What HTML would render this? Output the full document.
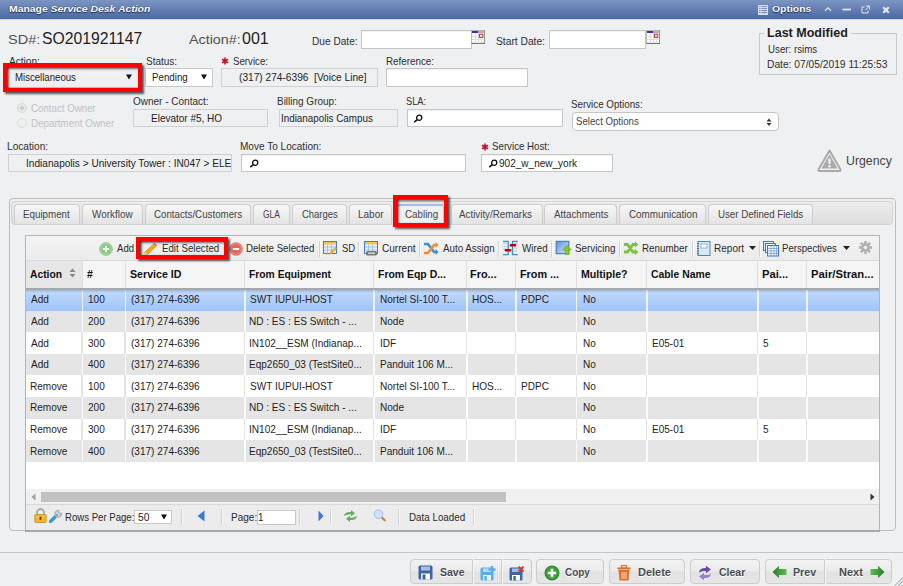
<!DOCTYPE html>
<html><head><meta charset="utf-8">
<style>
*{box-sizing:border-box;margin:0;padding:0}
html,body{width:903px;height:586px;overflow:hidden;background:#eff0f2;font-family:"Liberation Sans",sans-serif;position:relative}
.t{position:absolute;white-space:nowrap;font-family:"Liberation Sans",sans-serif}
.b{position:absolute}
</style></head><body>
<div class="b" style="left:0.00px;top:0.00px;width:903.00px;height:18.80px;background:linear-gradient(#7c95c2,#4a68a5)"></div>
<div class="b" style="left:0.00px;top:18.80px;width:903.00px;height:1.70px;background:linear-gradient(rgba(60,70,90,.3),rgba(60,70,90,0))"></div>
<div class="t" style="left:8.72px;top:3.70px;font-size:9.8px;line-height:9.8px;color:#fff;font-weight:bold;transform:scaleX(1.0617);transform-origin:0 0;text-shadow:0 0 1px #1d2f55,0 1px 1px #1d2f55;">Manage <i>Service Desk Action</i></div>
<div class="t" style="left:772.08px;top:3.70px;font-size:9.8px;line-height:9.8px;color:#fff;font-weight:bold;transform:scaleX(1.0618);transform-origin:0 0;text-shadow:0 0 1px #1d2f55,0 1px 1px #1d2f55;">Options</div>
<svg class="b" style="left:758px;top:4.5px" width="10" height="10" viewBox="0 0 10 10"><rect x="0.5" y="0.5" width="9" height="9" fill="rgba(255,255,255,.15)" stroke="#d8e0ee"/><path d="M1 2.5H9M1 4.5H9M1 6.5H9M1 8.5H9" stroke="#d8e0ee" stroke-width="0.9"/><path d="M3 1V9" stroke="#d8e0ee" stroke-width="0.9"/></svg>
<svg class="b" style="left:823.5px;top:6px" width="8" height="6" viewBox="0 0 8 6"><path d="M1 4.8L4 1.8L7 4.8" fill="none" stroke="#dfe6f2" stroke-width="1.3"/></svg>
<svg class="b" style="left:841.5px;top:8px" width="10" height="3" viewBox="0 0 10 3"><rect x="0.5" y="0.6" width="8.5" height="1.8" fill="#dfe6f2"/></svg>
<svg class="b" style="left:861px;top:5px" width="10" height="9" viewBox="0 0 10 9"><path d="M3.5 2H1V8H7V5.5" fill="none" stroke="#dfe6f2" stroke-width="1"/><path d="M5 1H8.5V4.5M8.5 1L4.5 5" fill="none" stroke="#dfe6f2" stroke-width="1"/></svg>
<svg class="b" style="left:881.5px;top:5.5px" width="8" height="8" viewBox="0 0 8 8"><path d="M1.2 1.2L6.8 6.8M6.8 1.2L1.2 6.8" stroke="#e6ecf6" stroke-width="2"/></svg>
<div class="t" style="left:7.55px;top:33.44px;font-size:13.3px;line-height:13.3px;color:#505050;font-weight:normal;transform:scaleX(1.0900);transform-origin:0 0;">SD#:</div>
<div class="t" style="left:41.59px;top:31.46px;font-size:16px;line-height:16px;color:#1e1e1e;font-weight:normal;transform:scaleX(0.9835);transform-origin:0 0;">SO201921147</div>
<div class="t" style="left:188.80px;top:33.29px;font-size:13.6px;line-height:13.6px;color:#505050;font-weight:normal;transform:scaleX(1.0513);transform-origin:0 0;">Action#:</div>
<div class="t" style="left:242.44px;top:31.46px;font-size:16px;line-height:16px;color:#1e1e1e;font-weight:normal;transform:scaleX(1.0016);transform-origin:0 0;">001</div>
<div class="t" style="left:312.19px;top:36.16px;font-size:10.8px;line-height:10.8px;color:#2e2e2e;font-weight:normal;transform:scaleX(0.9377);transform-origin:0 0;">Due Date:</div>
<div class="b" style="left:361.00px;top:30.30px;width:110.60px;height:18.40px;background:#fff;border:1px solid #c6c6c6;box-shadow:inset 0 1px 1px rgba(0,0,0,.06)"></div>
<div class="t" style="left:496.14px;top:36.16px;font-size:10.8px;line-height:10.8px;color:#2e2e2e;font-weight:normal;transform:scaleX(0.9488);transform-origin:0 0;">Start Date:</div>
<div class="b" style="left:549.30px;top:30.30px;width:96.30px;height:18.40px;background:#fff;border:1px solid #c6c6c6;box-shadow:inset 0 1px 1px rgba(0,0,0,.06)"></div>
<svg class="b" style="left:471px;top:30px" width="14" height="14" viewBox="0 0 14 14"><rect x="0.5" y="0.5" width="13.5" height="13" fill="#fff" stroke="#b8b8b8"/><path d="M14 0.5V13.8H0.5" fill="none" stroke="#5a5a5a" stroke-width="1.2"/><rect x="1" y="1" width="6.5" height="2" fill="#3434b4"/><rect x="7.5" y="1" width="6" height="2" fill="#b0b0b0"/><path d="M1 6.5H13.5M1 9.5H13.5M1 12.3H13.5M4.5 3V13.3M7.5 3V13.3M10.5 3V13.3" stroke="#dadada" stroke-width="0.9"/><rect x="8.4" y="4.2" width="3.4" height="3.2" fill="#fbecec" stroke="#c03434" stroke-width="1"/></svg>
<svg class="b" style="left:645.6px;top:30px" width="14" height="14" viewBox="0 0 14 14"><rect x="0.5" y="0.5" width="13.5" height="13" fill="#fff" stroke="#b8b8b8"/><path d="M14 0.5V13.8H0.5" fill="none" stroke="#5a5a5a" stroke-width="1.2"/><rect x="1" y="1" width="6.5" height="2" fill="#3434b4"/><rect x="7.5" y="1" width="6" height="2" fill="#b0b0b0"/><path d="M1 6.5H13.5M1 9.5H13.5M1 12.3H13.5M4.5 3V13.3M7.5 3V13.3M10.5 3V13.3" stroke="#dadada" stroke-width="0.9"/><rect x="8.4" y="4.2" width="3.4" height="3.2" fill="#fbecec" stroke="#c03434" stroke-width="1"/></svg>
<div class="b" style="left:759.30px;top:33.20px;width:137.30px;height:42.20px;border:1px solid #c9c9c9"></div>
<div class="b" style="left:764.00px;top:27.00px;width:87.00px;height:12.00px;background:#eff0f2"></div>
<div class="t" style="left:766.98px;top:26.66px;font-size:12.8px;line-height:12.8px;color:#1e1e1e;font-weight:bold;transform:scaleX(0.9798);transform-origin:0 0;">Last Modified</div>
<div class="t" style="left:767.57px;top:43.56px;font-size:10.8px;line-height:10.8px;color:#2e2e2e;font-weight:normal;transform:scaleX(0.9000);transform-origin:0 0;">User: rsims</div>
<div class="t" style="left:767.48px;top:58.66px;font-size:10.8px;line-height:10.8px;color:#2e2e2e;font-weight:normal;transform:scaleX(0.9482);transform-origin:0 0;">Date: 07/05/2019 11:25:53</div>
<div class="t" style="left:8.50px;top:55.86px;font-size:10.8px;line-height:10.8px;color:#2e2e2e;font-weight:normal;transform:scaleX(0.9353);transform-origin:0 0;">Action:</div>
<div class="t" style="left:145.65px;top:55.86px;font-size:10.8px;line-height:10.8px;color:#2e2e2e;font-weight:normal;transform:scaleX(0.9259);transform-origin:0 0;">Status:</div>
<div class="t" style="left:232.86px;top:55.86px;font-size:10.8px;line-height:10.8px;color:#2e2e2e;font-weight:normal;transform:scaleX(0.8967);transform-origin:0 0;">Service:</div>
<div class="t" style="left:386.21px;top:55.86px;font-size:10.8px;line-height:10.8px;color:#2e2e2e;font-weight:normal;transform:scaleX(0.9093);transform-origin:0 0;">Reference:</div>
<svg class="b" style="left:221px;top:57px" width="8" height="8" viewBox="0 0 8 8"><path d="M4 0.5V7.5M1 2.2L7 5.8M7 2.2L1 5.8" stroke="#c8102a" stroke-width="1.6"/></svg>
<div class="b" style="left:7.00px;top:66.80px;width:131.00px;height:20.90px;background:linear-gradient(#f1f2f4,#eceef0);border-bottom:1px solid #c4c4c4"></div>
<div class="b" style="left:3.00px;top:62.80px;width:139.00px;height:28.90px;z-index:5;border:4px solid #ff0000;box-shadow:1.5px 1.5px 2px rgba(0,0,0,.65), inset 1.5px 1.5px 2.5px rgba(0,0,0,.8)"></div>
<div class="t" style="left:14.73px;top:72.46px;font-size:10.8px;line-height:10.8px;color:#222;font-weight:normal;transform:scaleX(0.8902);transform-origin:0 0;">Miscellaneous</div>
<svg class="b" style="left:125.5px;top:74px" width="6" height="6" viewBox="0 0 6 6"><path d="M0 0.5H6L3 5.5Z" fill="#111"/></svg>
<div class="b" style="left:145.40px;top:68.30px;width:67.60px;height:18.50px;background:#fff;border:1px solid #c9c9c9"></div>
<div class="t" style="left:152.22px;top:72.36px;font-size:10.8px;line-height:10.8px;color:#222;font-weight:normal;transform:scaleX(0.9023);transform-origin:0 0;">Pending</div>
<svg class="b" style="left:201.3px;top:74px" width="6" height="6" viewBox="0 0 6 6"><path d="M0 0.5H6L3 5.5Z" fill="#111"/></svg>
<div class="b" style="left:221.30px;top:68.30px;width:156.50px;height:18.50px;background:#eff0f2;border:1px solid #d0d0d0"></div>
<div class="t" style="left:239.39px;top:72.36px;font-size:10.8px;line-height:10.8px;color:#222;font-weight:normal;transform:scaleX(0.9404);transform-origin:0 0;">(317) 274-6396&nbsp; [Voice Line]</div>
<div class="b" style="left:386.00px;top:68.30px;width:142.00px;height:18.50px;background:#fff;border:1px solid #c6c6c6;box-shadow:inset 0 1px 1px rgba(0,0,0,.06)"></div>
<div class="b" style="left:17.00px;top:103.00px;width:10.00px;height:10.00px;border-radius:50%;border:1px solid #d8d8d8;background:#eaeaea"></div>
<div class="b" style="left:20.00px;top:106.00px;width:4.00px;height:4.00px;border-radius:50%;background:#c9c9c9"></div>
<div class="b" style="left:17.00px;top:118.00px;width:10.00px;height:10.00px;border-radius:50%;border:1px solid #dcdcdc;background:#efefef"></div>
<div class="t" style="left:31.41px;top:102.66px;font-size:10.8px;line-height:10.8px;color:#c2c2c2;font-weight:normal;transform:scaleX(0.9000);transform-origin:0 0;">Contact Owner</div>
<div class="t" style="left:31.11px;top:117.66px;font-size:10.8px;line-height:10.8px;color:#c2c2c2;font-weight:normal;transform:scaleX(0.9132);transform-origin:0 0;">Department Owner</div>
<div class="t" style="left:132.75px;top:95.86px;font-size:10.8px;line-height:10.8px;color:#2e2e2e;font-weight:normal;transform:scaleX(0.9253);transform-origin:0 0;">Owner - Contact:</div>
<div class="b" style="left:133.00px;top:109.30px;width:134.60px;height:18.20px;background:#eff0f2;border:1px solid #d0d0d0"></div>
<div class="t" style="left:151.40px;top:112.86px;font-size:10.8px;line-height:10.8px;color:#222;font-weight:normal;transform:scaleX(0.9253);transform-origin:0 0;">Elevator #5, HO</div>
<div class="t" style="left:277.40px;top:95.86px;font-size:10.8px;line-height:10.8px;color:#2e2e2e;font-weight:normal;transform:scaleX(0.9235);transform-origin:0 0;">Billing Group:</div>
<div class="b" style="left:278.50px;top:109.30px;width:119.00px;height:18.20px;background:#eff0f2;border:1px solid #d0d0d0"></div>
<div class="t" style="left:280.81px;top:112.86px;font-size:10.8px;line-height:10.8px;color:#222;font-weight:normal;transform:scaleX(0.9114);transform-origin:0 0;">Indianapolis Campus</div>
<div class="t" style="left:405.78px;top:95.86px;font-size:10.8px;line-height:10.8px;color:#2e2e2e;font-weight:normal;transform:scaleX(0.8554);transform-origin:0 0;">SLA:</div>
<div class="b" style="left:406.60px;top:109.30px;width:156.90px;height:18.20px;background:#fff;border:1px solid #c6c6c6;box-shadow:inset 0 1px 1px rgba(0,0,0,.06)"></div>
<svg class="b" style="left:413px;top:114px" width="10" height="9" viewBox="0 0 10 9"><circle cx="6.2" cy="3.8" r="2.6" fill="#fff" stroke="#111" stroke-width="1.3"/><path d="M4.3 5.7L1.3 8.2" stroke="#111" stroke-width="1.6"/></svg>
<div class="t" style="left:571.16px;top:99.36px;font-size:10.8px;line-height:10.8px;color:#2e2e2e;font-weight:normal;transform:scaleX(0.9047);transform-origin:0 0;">Service Options:</div>
<div class="b" style="left:572.40px;top:112.20px;width:206.30px;height:19.30px;background:#fff;border:1px solid #c6c6c6;border-radius:4px"></div>
<div class="t" style="left:575.57px;top:115.76px;font-size:10.8px;line-height:10.8px;color:#444;font-weight:normal;transform:scaleX(0.8935);transform-origin:0 0;">Select Options</div>
<svg class="b" style="left:766px;top:118px" width="6" height="9" viewBox="0 0 6 9"><path d="M0.5 3.5H5.5L3 0.5ZM0.5 5H5.5L3 8Z" fill="#333"/></svg>
<div class="t" style="left:7.29px;top:141.06px;font-size:10.8px;line-height:10.8px;color:#2e2e2e;font-weight:normal;transform:scaleX(0.9378);transform-origin:0 0;">Location:</div>
<div class="b" style="left:8.30px;top:153.80px;width:224.20px;height:18.60px;background:#eff0f2;border:1px solid #d0d0d0;overflow:hidden"></div>
<div class="b" style="left:9.3px;top:154.8px;width:222px;height:16.6px;overflow:hidden">
<div class="t" style="left:16.69px;top:2.86px;font-size:10.8px;line-height:10.8px;color:#222;font-weight:normal;transform:scaleX(0.9353);transform-origin:0 0;">Indianapolis &gt; University Tower : IN047 &gt; ELEV</div>
</div>
<div class="t" style="left:240.30px;top:141.06px;font-size:10.8px;line-height:10.8px;color:#2e2e2e;font-weight:normal;transform:scaleX(0.9306);transform-origin:0 0;">Move To Location:</div>
<div class="b" style="left:241.00px;top:154.30px;width:224.50px;height:17.90px;background:#fff;border:1px solid #c6c6c6;box-shadow:inset 0 1px 1px rgba(0,0,0,.06)"></div>
<svg class="b" style="left:248.5px;top:159px" width="10" height="9" viewBox="0 0 10 9"><circle cx="6.2" cy="3.8" r="2.6" fill="#fff" stroke="#111" stroke-width="1.3"/><path d="M4.3 5.7L1.3 8.2" stroke="#111" stroke-width="1.6"/></svg>
<svg class="b" style="left:481px;top:143px" width="8" height="8" viewBox="0 0 8 8"><path d="M4 0.5V7.5M1 2.2L7 5.8M7 2.2L1 5.8" stroke="#c8102a" stroke-width="1.6"/></svg>
<div class="t" style="left:491.96px;top:141.06px;font-size:10.8px;line-height:10.8px;color:#2e2e2e;font-weight:normal;transform:scaleX(0.8997);transform-origin:0 0;">Service Host:</div>
<div class="b" style="left:481.40px;top:154.30px;width:131.60px;height:17.90px;background:#fff;border:1px solid #c6c6c6;box-shadow:inset 0 1px 1px rgba(0,0,0,.06)"></div>
<svg class="b" style="left:487.5px;top:159px" width="10" height="9" viewBox="0 0 10 9"><circle cx="6.2" cy="3.8" r="2.6" fill="#fff" stroke="#111" stroke-width="1.3"/><path d="M4.3 5.7L1.3 8.2" stroke="#111" stroke-width="1.6"/></svg>
<div class="t" style="left:498.55px;top:157.66px;font-size:10.8px;line-height:10.8px;color:#222;font-weight:normal;transform:scaleX(0.9289);transform-origin:0 0;">902_w_new_york</div>
<svg class="b" style="left:817px;top:148.5px" width="25" height="23" viewBox="0 0 25 23"><path d="M12.5 1.5L23.5 20.5Q24 22 22.5 22H2.5Q1 22 1.5 20.5Z" fill="none" stroke="#a9a9a9" stroke-width="2" stroke-linejoin="round"/><path d="M12.5 5.5L20.5 19.5H4.5Z" fill="#a9a9a9"/><rect x="11.3" y="9.5" width="2.4" height="5.5" rx="1" fill="#eff0f2"/><circle cx="12.5" cy="17.2" r="1.3" fill="#eff0f2"/></svg>
<div class="t" style="left:846.08px;top:153.83px;font-size:13.2px;line-height:13.2px;color:#444;font-weight:normal;transform:scaleX(0.9340);transform-origin:0 0;">Urgency</div>
<div class="b" style="left:8.50px;top:198.30px;width:887.50px;height:333.20px;border:1px solid #bdbdbd;border-radius:4px"></div>
<div class="b" style="left:11.00px;top:200.50px;width:882.40px;height:24.50px;border:1px solid #d3d3d3;border-radius:4px;background:linear-gradient(#ececec,#dedede)"></div>
<div class="b" style="left:14.30px;top:204.30px;width:65.30px;height:20.20px;background:linear-gradient(#f7f7f7,#e3e3e3);border:1px solid #cdcdcd;border-bottom:none;border-radius:4px 4px 0 0"></div>
<div class="t" style="left:23.12px;top:208.86px;font-size:10.8px;line-height:10.8px;color:#444;font-weight:normal;transform:scaleX(0.9062);transform-origin:0 0;">Equipment</div>
<div class="b" style="left:81.80px;top:204.30px;width:60.90px;height:20.20px;background:linear-gradient(#f7f7f7,#e3e3e3);border:1px solid #cdcdcd;border-bottom:none;border-radius:4px 4px 0 0"></div>
<div class="t" style="left:91.60px;top:208.86px;font-size:10.8px;line-height:10.8px;color:#444;font-weight:normal;transform:scaleX(0.9180);transform-origin:0 0;">Workflow</div>
<div class="b" style="left:144.80px;top:204.30px;width:106.20px;height:20.20px;background:linear-gradient(#f7f7f7,#e3e3e3);border:1px solid #cdcdcd;border-bottom:none;border-radius:4px 4px 0 0"></div>
<div class="t" style="left:153.61px;top:208.86px;font-size:10.8px;line-height:10.8px;color:#444;font-weight:normal;transform:scaleX(0.9017);transform-origin:0 0;">Contacts/Customers</div>
<div class="b" style="left:253.00px;top:204.30px;width:36.80px;height:20.20px;background:linear-gradient(#f7f7f7,#e3e3e3);border:1px solid #cdcdcd;border-bottom:none;border-radius:4px 4px 0 0"></div>
<div class="t" style="left:263.27px;top:208.86px;font-size:10.8px;line-height:10.8px;color:#444;font-weight:normal;transform:scaleX(0.7882);transform-origin:0 0;">GLA</div>
<div class="b" style="left:292.00px;top:204.30px;width:54.50px;height:20.20px;background:linear-gradient(#f7f7f7,#e3e3e3);border:1px solid #cdcdcd;border-bottom:none;border-radius:4px 4px 0 0"></div>
<div class="t" style="left:302.03px;top:208.86px;font-size:10.8px;line-height:10.8px;color:#444;font-weight:normal;transform:scaleX(0.8771);transform-origin:0 0;">Charges</div>
<div class="b" style="left:349.30px;top:204.30px;width:42.50px;height:20.20px;background:linear-gradient(#f7f7f7,#e3e3e3);border:1px solid #cdcdcd;border-bottom:none;border-radius:4px 4px 0 0"></div>
<div class="t" style="left:358.20px;top:208.86px;font-size:10.8px;line-height:10.8px;color:#444;font-weight:normal;transform:scaleX(0.9240);transform-origin:0 0;">Labor</div>
<div class="b" style="left:397.00px;top:203.50px;width:47.00px;height:22.00px;background:#eff0f2;border:1px solid #cfcfcf;border-bottom:none;border-top:2px solid #9fbde6;border-radius:3px 3px 0 0"></div>
<div class="t" style="left:404.51px;top:208.86px;font-size:10.8px;line-height:10.8px;color:#444;font-weight:normal;transform:scaleX(0.9090);transform-origin:0 0;">Cabling</div>
<div class="b" style="left:450.50px;top:204.30px;width:92.20px;height:20.20px;background:linear-gradient(#f7f7f7,#e3e3e3);border:1px solid #cdcdcd;border-bottom:none;border-radius:4px 4px 0 0"></div>
<div class="t" style="left:458.90px;top:208.86px;font-size:10.8px;line-height:10.8px;color:#444;font-weight:normal;transform:scaleX(0.9072);transform-origin:0 0;">Activity/Remarks</div>
<div class="b" style="left:544.00px;top:204.30px;width:72.70px;height:20.20px;background:linear-gradient(#f7f7f7,#e3e3e3);border:1px solid #cdcdcd;border-bottom:none;border-radius:4px 4px 0 0"></div>
<div class="t" style="left:553.70px;top:208.86px;font-size:10.8px;line-height:10.8px;color:#444;font-weight:normal;transform:scaleX(0.9050);transform-origin:0 0;">Attachments</div>
<div class="b" style="left:619.00px;top:204.30px;width:87.20px;height:20.20px;background:linear-gradient(#f7f7f7,#e3e3e3);border:1px solid #cdcdcd;border-bottom:none;border-radius:4px 4px 0 0"></div>
<div class="t" style="left:628.91px;top:208.86px;font-size:10.8px;line-height:10.8px;color:#444;font-weight:normal;transform:scaleX(0.9131);transform-origin:0 0;">Communication</div>
<div class="b" style="left:708.40px;top:204.30px;width:104.30px;height:20.20px;background:linear-gradient(#f7f7f7,#e3e3e3);border:1px solid #cdcdcd;border-bottom:none;border-radius:4px 4px 0 0"></div>
<div class="t" style="left:717.97px;top:208.86px;font-size:10.8px;line-height:10.8px;color:#444;font-weight:normal;transform:scaleX(0.8982);transform-origin:0 0;">User Defined Fields</div>
<div class="b" style="left:393.00px;top:195.00px;width:55.00px;height:32.00px;z-index:5;border:4px solid #ff0000;box-shadow:1.5px 1.5px 2px rgba(0,0,0,.65), inset 1.5px 1.5px 2.5px rgba(0,0,0,.8)"></div>
<div class="b" style="left:25.00px;top:235.00px;width:855.00px;height:296.00px;border:1px solid #b4b4b4;background:#fff"></div>
<div class="b" style="left:26.00px;top:236.00px;width:853.00px;height:24.50px;background:linear-gradient(#f4f4f4,#ebebeb);border-bottom:1px solid #dadada"></div>
<div class="t" style="left:117.40px;top:243.36px;font-size:10.8px;line-height:10.8px;color:#2a2a2a;font-weight:normal;transform:scaleX(0.8882);transform-origin:0 0;">Add</div>
<div class="t" style="left:161.82px;top:243.36px;font-size:10.8px;line-height:10.8px;color:#2a2a2a;font-weight:normal;transform:scaleX(0.8986);transform-origin:0 0;">Edit Selected</div>
<div class="t" style="left:246.23px;top:243.36px;font-size:10.8px;line-height:10.8px;color:#2a2a2a;font-weight:normal;transform:scaleX(0.8965);transform-origin:0 0;">Delete Selected</div>
<div class="t" style="left:341.57px;top:243.36px;font-size:10.8px;line-height:10.8px;color:#2a2a2a;font-weight:normal;transform:scaleX(0.8795);transform-origin:0 0;">SD</div>
<div class="t" style="left:381.50px;top:243.36px;font-size:10.8px;line-height:10.8px;color:#2a2a2a;font-weight:normal;transform:scaleX(0.9316);transform-origin:0 0;">Current</div>
<div class="t" style="left:442.60px;top:243.36px;font-size:10.8px;line-height:10.8px;color:#2a2a2a;font-weight:normal;transform:scaleX(0.9064);transform-origin:0 0;">Auto Assign</div>
<div class="t" style="left:522.00px;top:243.36px;font-size:10.8px;line-height:10.8px;color:#2a2a2a;font-weight:normal;transform:scaleX(0.9078);transform-origin:0 0;">Wired</div>
<div class="t" style="left:574.56px;top:243.36px;font-size:10.8px;line-height:10.8px;color:#2a2a2a;font-weight:normal;transform:scaleX(0.9086);transform-origin:0 0;">Servicing</div>
<div class="t" style="left:641.72px;top:243.36px;font-size:10.8px;line-height:10.8px;color:#2a2a2a;font-weight:normal;transform:scaleX(0.9067);transform-origin:0 0;">Renumber</div>
<div class="t" style="left:714.40px;top:243.36px;font-size:10.8px;line-height:10.8px;color:#2a2a2a;font-weight:normal;transform:scaleX(0.9291);transform-origin:0 0;">Report</div>
<div class="t" style="left:781.93px;top:243.36px;font-size:10.8px;line-height:10.8px;color:#2a2a2a;font-weight:normal;transform:scaleX(0.8880);transform-origin:0 0;">Perspectives</div>
<div class="b" style="left:318.50px;top:240.50px;width:1.00px;height:16.00px;background:#d4d4d4"></div>
<div class="b" style="left:319.50px;top:240.50px;width:1.00px;height:16.00px;background:#fafafa"></div>
<div class="b" style="left:358.30px;top:240.50px;width:1.00px;height:16.00px;background:#d4d4d4"></div>
<div class="b" style="left:359.30px;top:240.50px;width:1.00px;height:16.00px;background:#fafafa"></div>
<div class="b" style="left:418.50px;top:240.50px;width:1.00px;height:16.00px;background:#d4d4d4"></div>
<div class="b" style="left:419.50px;top:240.50px;width:1.00px;height:16.00px;background:#fafafa"></div>
<div class="b" style="left:498.30px;top:240.50px;width:1.00px;height:16.00px;background:#d4d4d4"></div>
<div class="b" style="left:499.30px;top:240.50px;width:1.00px;height:16.00px;background:#fafafa"></div>
<div class="b" style="left:551.00px;top:240.50px;width:1.00px;height:16.00px;background:#d4d4d4"></div>
<div class="b" style="left:552.00px;top:240.50px;width:1.00px;height:16.00px;background:#fafafa"></div>
<div class="b" style="left:618.70px;top:240.50px;width:1.00px;height:16.00px;background:#d4d4d4"></div>
<div class="b" style="left:619.70px;top:240.50px;width:1.00px;height:16.00px;background:#fafafa"></div>
<div class="b" style="left:691.50px;top:240.50px;width:1.00px;height:16.00px;background:#d4d4d4"></div>
<div class="b" style="left:692.50px;top:240.50px;width:1.00px;height:16.00px;background:#fafafa"></div>
<div class="b" style="left:758.90px;top:240.50px;width:1.00px;height:16.00px;background:#d4d4d4"></div>
<div class="b" style="left:759.90px;top:240.50px;width:1.00px;height:16.00px;background:#fafafa"></div>
<svg class="b" style="left:99px;top:242px" width="14" height="14" viewBox="0 0 14 14"><circle cx="7" cy="7" r="6.3" fill="#a8dca0" stroke="#7cbc74" stroke-width="0.8"/><circle cx="7" cy="7" r="4.8" fill="#86c97d"/><path d="M7 3.8V10.2M3.8 7H10.2" stroke="#fff" stroke-width="2"/></svg>
<svg class="b" style="left:141.5px;top:241.5px" width="16" height="15" viewBox="0 0 16 15"><path d="M2 13L3 10L12 1.5L14.5 4L5.5 12.5Z" fill="#f5a623" stroke="#c77d10" stroke-width="0.6"/><path d="M12 1.5L14.5 4L15 3.3L12.7 1Z" fill="#c0599b"/><path d="M2 13L3 10L5.5 12.5Z" fill="#f1d9a8"/></svg>
<svg class="b" style="left:229px;top:242px" width="14" height="14" viewBox="0 0 14 14"><circle cx="7" cy="7" r="6.3" fill="#ee8a7c" stroke="#d66858" stroke-width="0.8"/><circle cx="7" cy="7" r="4.8" fill="#e4675a"/><path d="M3.8 7H10.2" stroke="#fff" stroke-width="2"/></svg>
<svg class="b" style="left:322.5px;top:241px" width="15" height="15" viewBox="0 0 15 15"><rect x="0.5" y="0.5" width="13" height="12" fill="#e8f0fa" stroke="#3d82c4"/><rect x="1" y="1" width="12" height="2.5" fill="#f2c35a"/><path d="M1 6H13M1 9H13M4.5 3.5V12.5M8.5 3.5V12.5" stroke="#9bb8dc" stroke-width="0.8"/><path d="M6 14L7 11L12.5 6L14 7.5L8.5 12.5Z" fill="#f5a623"/><path d="M12.5 6L14 7.5L14.6 6.9L13.1 5.4Z" fill="#c0599b"/></svg>
<svg class="b" style="left:363.5px;top:241px" width="15" height="15" viewBox="0 0 15 15"><rect x="0.5" y="0.5" width="13" height="12" fill="#e8f0fa" stroke="#3d82c4"/><rect x="1" y="1" width="12" height="2.5" fill="#f2c35a"/><path d="M1 6H13M1 9H13M4.5 3.5V12.5M8.5 3.5V12.5" stroke="#9bb8dc" stroke-width="0.8"/><rect x="2" y="10" width="11" height="4.5" rx="1.5" fill="#777"/><rect x="4" y="11.3" width="7" height="1.8" fill="#ccc"/></svg>
<svg class="b" style="left:423px;top:241px" width="16" height="15" viewBox="0 0 16 15"><path d="M1 3L5 3L11 11L14 11" fill="none" stroke="#3d8fd0" stroke-width="2.6"/><path d="M1 12L5 12L11 4L13 4" fill="none" stroke="#e8913a" stroke-width="2.6"/><path d="M12.5 1L15.5 4L12.5 7Z" fill="#e8913a"/><path d="M12.5 8L15.5 11L12.5 14Z" fill="#3d8fd0"/></svg>
<svg class="b" style="left:500px;top:239px" width="20" height="19" viewBox="0 0 20 19"><path d="M3 2.4H8.2V15.6H3M17.8 2.4H12.5V15.6H17.8" fill="none" stroke="#3a93c8" stroke-width="1.3"/><path d="M3.2 4.2H7.5M13.2 4.2H17.6" stroke="#8cc8f0" stroke-width="1"/><path d="M3.5 7.5H6.5M3.5 10H5.5M14 9H17M14.5 11.8H17" stroke="#c4c4c4" stroke-width="1"/><path d="M10.8 6.2H15.2M5.8 11.3H10.2" stroke="#c00010" stroke-width="2.4" stroke-linecap="round"/></svg>
<svg class="b" style="left:555px;top:240px" width="17" height="16" viewBox="0 0 17 16"><defs><linearGradient id="sg" x1="0" y1="0" x2="1" y2="1"><stop offset="0" stop-color="#5d93d4"/><stop offset="1" stop-color="#d8e8f6"/></linearGradient></defs><rect x="1.2" y="1.4" width="12.6" height="12.2" fill="url(#sg)" stroke="#4a7fc0" stroke-width="1.2"/><path d="M12 5.3L16.2 9.8H13.8V14.6H10.2V9.8H7.8Z" fill="#8cc820" stroke="#5f9a10" stroke-width="0.6"/></svg>
<svg class="b" style="left:623px;top:241px" width="16" height="15" viewBox="0 0 16 15"><path d="M1 3.5H4.5L10 11H12.5M1 11H4.5L10 3.5H12.5" fill="none" stroke="#7ec23a" stroke-width="2.8"/><path d="M12 0.5L15.5 3.5L12 6.5ZM12 8L15.5 11L12 14Z" fill="#7ec23a"/></svg>
<svg class="b" style="left:696px;top:241px" width="15" height="15" viewBox="0 0 15 15"><rect x="2" y="0.5" width="12" height="14" fill="#dbe9f7" stroke="#4a83c0"/><rect x="5" y="3" width="6" height="4" fill="#fff" stroke="#7aa3d0" stroke-width="0.8"/><path d="M1 2.5H3M1 5H3M1 7.5H3M1 10H3M1 12.5H3" stroke="#4a6f99"/></svg>
<svg class="b" style="left:749px;top:246px" width="7" height="4" viewBox="0 0 7 4"><path d="M0 0H7L3.5 4Z" fill="#222"/></svg>
<svg class="b" style="left:762.5px;top:240.5px" width="17" height="16" viewBox="0 0 17 16"><rect x="0.5" y="0.5" width="10" height="9" fill="#e3eef9" stroke="#3a7cc0"/><rect x="2.5" y="2.5" width="10" height="9" fill="#e3eef9" stroke="#3a7cc0"/><rect x="4.5" y="4.5" width="11" height="10.5" fill="#f4f8fc" stroke="#3a7cc0"/><path d="M5 7.5H15M5 10H15M5 12.5H15M8 5V15M11 5V15M13.5 5V15" stroke="#6a9ad0" stroke-width="0.7"/></svg>
<svg class="b" style="left:842.5px;top:246px" width="7" height="4" viewBox="0 0 7 4"><path d="M0 0H7L3.5 4Z" fill="#222"/></svg>
<svg class="b" style="left:859px;top:241px" width="13" height="13" viewBox="0 0 13 13"><g fill="#b0b0b0"><circle cx="6.5" cy="6.5" r="4.3"/><rect x="5.2" y="0" width="2.6" height="13"/><rect x="0" y="5.2" width="13" height="2.6"/><rect x="5.2" y="0" width="2.6" height="13" transform="rotate(45 6.5 6.5)"/><rect x="5.2" y="0" width="2.6" height="13" transform="rotate(-45 6.5 6.5)"/></g><circle cx="6.5" cy="6.5" r="1.8" fill="#eeeeee"/></svg>
<div class="b" style="left:135.80px;top:237.00px;width:91.80px;height:21.80px;z-index:5;border:4px solid #ff0000;box-shadow:1.5px 1.5px 2px rgba(0,0,0,.65), inset 1.5px 1.5px 2.5px rgba(0,0,0,.8)"></div>
<div class="b" style="left:26.00px;top:260.50px;width:853.00px;height:28.50px;background:#f5f5f5"></div>
<div class="b" style="left:26.00px;top:260.50px;width:56.00px;height:28.50px;background:#e6e6e6"></div>
<div class="b" style="left:81.50px;top:260.50px;width:1.00px;height:28.50px;background:#dedede"></div>
<div class="b" style="left:124.50px;top:260.50px;width:1.00px;height:28.50px;background:#dedede"></div>
<div class="b" style="left:244.10px;top:260.50px;width:1.00px;height:28.50px;background:#dedede"></div>
<div class="b" style="left:373.00px;top:260.50px;width:1.00px;height:28.50px;background:#dedede"></div>
<div class="b" style="left:466.00px;top:260.50px;width:1.00px;height:28.50px;background:#dedede"></div>
<div class="b" style="left:515.30px;top:260.50px;width:1.00px;height:28.50px;background:#dedede"></div>
<div class="b" style="left:575.80px;top:260.50px;width:1.00px;height:28.50px;background:#dedede"></div>
<div class="b" style="left:646.30px;top:260.50px;width:1.00px;height:28.50px;background:#dedede"></div>
<div class="b" style="left:756.90px;top:260.50px;width:1.00px;height:28.50px;background:#dedede"></div>
<div class="b" style="left:806.20px;top:260.50px;width:1.00px;height:28.50px;background:#dedede"></div>
<div class="t" style="left:29.74px;top:268.69px;font-size:11px;line-height:11px;color:#111;font-weight:bold;transform:scaleX(0.9376);transform-origin:0 0;">Action</div>
<div class="t" style="left:87.34px;top:268.69px;font-size:11px;line-height:11px;color:#111;font-weight:bold;transform:scaleX(0.9500);transform-origin:0 0;">#</div>
<div class="t" style="left:129.73px;top:268.69px;font-size:11px;line-height:11px;color:#111;font-weight:bold;transform:scaleX(0.9672);transform-origin:0 0;">Service ID</div>
<div class="t" style="left:249.43px;top:268.69px;font-size:11px;line-height:11px;color:#111;font-weight:bold;transform:scaleX(0.9368);transform-origin:0 0;">From Equipment</div>
<div class="t" style="left:378.02px;top:268.69px;font-size:11px;line-height:11px;color:#111;font-weight:bold;transform:scaleX(0.9498);transform-origin:0 0;">From Eqp D...</div>
<div class="t" style="left:470.49px;top:268.69px;font-size:11px;line-height:11px;color:#111;font-weight:bold;transform:scaleX(0.9917);transform-origin:0 0;">Fro...</div>
<div class="t" style="left:519.90px;top:268.69px;font-size:11px;line-height:11px;color:#111;font-weight:bold;transform:scaleX(0.9848);transform-origin:0 0;">From ...</div>
<div class="t" style="left:581.01px;top:268.69px;font-size:11px;line-height:11px;color:#111;font-weight:bold;transform:scaleX(0.9634);transform-origin:0 0;">Multiple?</div>
<div class="t" style="left:651.48px;top:268.69px;font-size:11px;line-height:11px;color:#111;font-weight:bold;transform:scaleX(0.9437);transform-origin:0 0;">Cable Name</div>
<div class="t" style="left:761.87px;top:268.69px;font-size:11px;line-height:11px;color:#111;font-weight:bold;transform:scaleX(1.0207);transform-origin:0 0;">Pai...</div>
<div class="t" style="left:811.37px;top:268.69px;font-size:11px;line-height:11px;color:#111;font-weight:bold;transform:scaleX(1.0239);transform-origin:0 0;">Pair/Stran...</div>
<svg class="b" style="left:69px;top:267.5px" width="7" height="10" viewBox="0 0 7 10"><path d="M0.5 4H6.5L3.5 0.5Z" fill="#888"/><path d="M0.5 6H6.5L3.5 9.5Z" fill="#888"/></svg>
<div class="b" style="left:26.00px;top:289.00px;width:853.00px;height:21.60px;background:linear-gradient(#c4dbfc,#9fc4f9)"></div>
<div class="b" style="left:26.00px;top:310.60px;width:853.00px;height:21.60px;background:#e5e5e5"></div>
<div class="b" style="left:26.00px;top:332.20px;width:853.00px;height:21.60px;background:#fff"></div>
<div class="b" style="left:26.00px;top:353.80px;width:853.00px;height:21.60px;background:#e5e5e5"></div>
<div class="b" style="left:26.00px;top:375.40px;width:853.00px;height:21.60px;background:#fff"></div>
<div class="b" style="left:26.00px;top:397.00px;width:853.00px;height:21.60px;background:#e5e5e5"></div>
<div class="b" style="left:26.00px;top:418.60px;width:853.00px;height:21.60px;background:#fff"></div>
<div class="b" style="left:26.00px;top:440.20px;width:853.00px;height:21.60px;background:#e5e5e5"></div>
<div class="b" style="left:81.50px;top:289.00px;width:1.70px;height:21.60px;background:rgba(255,255,255,.8)"></div>
<div class="b" style="left:81.50px;top:310.60px;width:1.70px;height:21.60px;background:rgba(255,255,255,.8)"></div>
<div class="b" style="left:81.40px;top:332.20px;width:1.20px;height:21.60px;background:#e4e4e4"></div>
<div class="b" style="left:81.50px;top:353.80px;width:1.70px;height:21.60px;background:rgba(255,255,255,.8)"></div>
<div class="b" style="left:81.40px;top:375.40px;width:1.20px;height:21.60px;background:#e4e4e4"></div>
<div class="b" style="left:81.50px;top:397.00px;width:1.70px;height:21.60px;background:rgba(255,255,255,.8)"></div>
<div class="b" style="left:81.40px;top:418.60px;width:1.20px;height:21.60px;background:#e4e4e4"></div>
<div class="b" style="left:81.50px;top:440.20px;width:1.70px;height:21.60px;background:rgba(255,255,255,.8)"></div>
<div class="b" style="left:124.50px;top:289.00px;width:1.70px;height:21.60px;background:rgba(255,255,255,.8)"></div>
<div class="b" style="left:124.50px;top:310.60px;width:1.70px;height:21.60px;background:rgba(255,255,255,.8)"></div>
<div class="b" style="left:124.40px;top:332.20px;width:1.20px;height:21.60px;background:#e4e4e4"></div>
<div class="b" style="left:124.50px;top:353.80px;width:1.70px;height:21.60px;background:rgba(255,255,255,.8)"></div>
<div class="b" style="left:124.40px;top:375.40px;width:1.20px;height:21.60px;background:#e4e4e4"></div>
<div class="b" style="left:124.50px;top:397.00px;width:1.70px;height:21.60px;background:rgba(255,255,255,.8)"></div>
<div class="b" style="left:124.40px;top:418.60px;width:1.20px;height:21.60px;background:#e4e4e4"></div>
<div class="b" style="left:124.50px;top:440.20px;width:1.70px;height:21.60px;background:rgba(255,255,255,.8)"></div>
<div class="b" style="left:244.10px;top:289.00px;width:1.70px;height:21.60px;background:rgba(255,255,255,.8)"></div>
<div class="b" style="left:244.10px;top:310.60px;width:1.70px;height:21.60px;background:rgba(255,255,255,.8)"></div>
<div class="b" style="left:244.00px;top:332.20px;width:1.20px;height:21.60px;background:#e4e4e4"></div>
<div class="b" style="left:244.10px;top:353.80px;width:1.70px;height:21.60px;background:rgba(255,255,255,.8)"></div>
<div class="b" style="left:244.00px;top:375.40px;width:1.20px;height:21.60px;background:#e4e4e4"></div>
<div class="b" style="left:244.10px;top:397.00px;width:1.70px;height:21.60px;background:rgba(255,255,255,.8)"></div>
<div class="b" style="left:244.00px;top:418.60px;width:1.20px;height:21.60px;background:#e4e4e4"></div>
<div class="b" style="left:244.10px;top:440.20px;width:1.70px;height:21.60px;background:rgba(255,255,255,.8)"></div>
<div class="b" style="left:373.00px;top:289.00px;width:1.70px;height:21.60px;background:rgba(255,255,255,.8)"></div>
<div class="b" style="left:373.00px;top:310.60px;width:1.70px;height:21.60px;background:rgba(255,255,255,.8)"></div>
<div class="b" style="left:372.90px;top:332.20px;width:1.20px;height:21.60px;background:#e4e4e4"></div>
<div class="b" style="left:373.00px;top:353.80px;width:1.70px;height:21.60px;background:rgba(255,255,255,.8)"></div>
<div class="b" style="left:372.90px;top:375.40px;width:1.20px;height:21.60px;background:#e4e4e4"></div>
<div class="b" style="left:373.00px;top:397.00px;width:1.70px;height:21.60px;background:rgba(255,255,255,.8)"></div>
<div class="b" style="left:372.90px;top:418.60px;width:1.20px;height:21.60px;background:#e4e4e4"></div>
<div class="b" style="left:373.00px;top:440.20px;width:1.70px;height:21.60px;background:rgba(255,255,255,.8)"></div>
<div class="b" style="left:466.00px;top:289.00px;width:1.70px;height:21.60px;background:rgba(255,255,255,.8)"></div>
<div class="b" style="left:466.00px;top:310.60px;width:1.70px;height:21.60px;background:rgba(255,255,255,.8)"></div>
<div class="b" style="left:465.90px;top:332.20px;width:1.20px;height:21.60px;background:#e4e4e4"></div>
<div class="b" style="left:466.00px;top:353.80px;width:1.70px;height:21.60px;background:rgba(255,255,255,.8)"></div>
<div class="b" style="left:465.90px;top:375.40px;width:1.20px;height:21.60px;background:#e4e4e4"></div>
<div class="b" style="left:466.00px;top:397.00px;width:1.70px;height:21.60px;background:rgba(255,255,255,.8)"></div>
<div class="b" style="left:465.90px;top:418.60px;width:1.20px;height:21.60px;background:#e4e4e4"></div>
<div class="b" style="left:466.00px;top:440.20px;width:1.70px;height:21.60px;background:rgba(255,255,255,.8)"></div>
<div class="b" style="left:515.30px;top:289.00px;width:1.70px;height:21.60px;background:rgba(255,255,255,.8)"></div>
<div class="b" style="left:515.30px;top:310.60px;width:1.70px;height:21.60px;background:rgba(255,255,255,.8)"></div>
<div class="b" style="left:515.20px;top:332.20px;width:1.20px;height:21.60px;background:#e4e4e4"></div>
<div class="b" style="left:515.30px;top:353.80px;width:1.70px;height:21.60px;background:rgba(255,255,255,.8)"></div>
<div class="b" style="left:515.20px;top:375.40px;width:1.20px;height:21.60px;background:#e4e4e4"></div>
<div class="b" style="left:515.30px;top:397.00px;width:1.70px;height:21.60px;background:rgba(255,255,255,.8)"></div>
<div class="b" style="left:515.20px;top:418.60px;width:1.20px;height:21.60px;background:#e4e4e4"></div>
<div class="b" style="left:515.30px;top:440.20px;width:1.70px;height:21.60px;background:rgba(255,255,255,.8)"></div>
<div class="b" style="left:575.80px;top:289.00px;width:1.70px;height:21.60px;background:rgba(255,255,255,.8)"></div>
<div class="b" style="left:575.80px;top:310.60px;width:1.70px;height:21.60px;background:rgba(255,255,255,.8)"></div>
<div class="b" style="left:575.70px;top:332.20px;width:1.20px;height:21.60px;background:#e4e4e4"></div>
<div class="b" style="left:575.80px;top:353.80px;width:1.70px;height:21.60px;background:rgba(255,255,255,.8)"></div>
<div class="b" style="left:575.70px;top:375.40px;width:1.20px;height:21.60px;background:#e4e4e4"></div>
<div class="b" style="left:575.80px;top:397.00px;width:1.70px;height:21.60px;background:rgba(255,255,255,.8)"></div>
<div class="b" style="left:575.70px;top:418.60px;width:1.20px;height:21.60px;background:#e4e4e4"></div>
<div class="b" style="left:575.80px;top:440.20px;width:1.70px;height:21.60px;background:rgba(255,255,255,.8)"></div>
<div class="b" style="left:646.30px;top:289.00px;width:1.70px;height:21.60px;background:rgba(255,255,255,.8)"></div>
<div class="b" style="left:646.30px;top:310.60px;width:1.70px;height:21.60px;background:rgba(255,255,255,.8)"></div>
<div class="b" style="left:646.20px;top:332.20px;width:1.20px;height:21.60px;background:#e4e4e4"></div>
<div class="b" style="left:646.30px;top:353.80px;width:1.70px;height:21.60px;background:rgba(255,255,255,.8)"></div>
<div class="b" style="left:646.20px;top:375.40px;width:1.20px;height:21.60px;background:#e4e4e4"></div>
<div class="b" style="left:646.30px;top:397.00px;width:1.70px;height:21.60px;background:rgba(255,255,255,.8)"></div>
<div class="b" style="left:646.20px;top:418.60px;width:1.20px;height:21.60px;background:#e4e4e4"></div>
<div class="b" style="left:646.30px;top:440.20px;width:1.70px;height:21.60px;background:rgba(255,255,255,.8)"></div>
<div class="b" style="left:756.90px;top:289.00px;width:1.70px;height:21.60px;background:rgba(255,255,255,.8)"></div>
<div class="b" style="left:756.90px;top:310.60px;width:1.70px;height:21.60px;background:rgba(255,255,255,.8)"></div>
<div class="b" style="left:756.80px;top:332.20px;width:1.20px;height:21.60px;background:#e4e4e4"></div>
<div class="b" style="left:756.90px;top:353.80px;width:1.70px;height:21.60px;background:rgba(255,255,255,.8)"></div>
<div class="b" style="left:756.80px;top:375.40px;width:1.20px;height:21.60px;background:#e4e4e4"></div>
<div class="b" style="left:756.90px;top:397.00px;width:1.70px;height:21.60px;background:rgba(255,255,255,.8)"></div>
<div class="b" style="left:756.80px;top:418.60px;width:1.20px;height:21.60px;background:#e4e4e4"></div>
<div class="b" style="left:756.90px;top:440.20px;width:1.70px;height:21.60px;background:rgba(255,255,255,.8)"></div>
<div class="b" style="left:806.20px;top:289.00px;width:1.70px;height:21.60px;background:rgba(255,255,255,.8)"></div>
<div class="b" style="left:806.20px;top:310.60px;width:1.70px;height:21.60px;background:rgba(255,255,255,.8)"></div>
<div class="b" style="left:806.10px;top:332.20px;width:1.20px;height:21.60px;background:#e4e4e4"></div>
<div class="b" style="left:806.20px;top:353.80px;width:1.70px;height:21.60px;background:rgba(255,255,255,.8)"></div>
<div class="b" style="left:806.10px;top:375.40px;width:1.20px;height:21.60px;background:#e4e4e4"></div>
<div class="b" style="left:806.20px;top:397.00px;width:1.70px;height:21.60px;background:rgba(255,255,255,.8)"></div>
<div class="b" style="left:806.10px;top:418.60px;width:1.20px;height:21.60px;background:#e4e4e4"></div>
<div class="b" style="left:806.20px;top:440.20px;width:1.70px;height:21.60px;background:rgba(255,255,255,.8)"></div>
<div class="b" style="left:26.00px;top:288.00px;width:853.00px;height:1.50px;background:#a3a8ae"></div>
<div class="b" style="left:26.00px;top:289.50px;width:853.00px;height:3.00px;background:linear-gradient(rgba(40,50,70,.22),rgba(40,50,70,0))"></div>
<div class="t" style="left:30.80px;top:294.46px;font-size:10.8px;line-height:10.8px;color:#1e1e1e;font-weight:normal;transform:scaleX(0.9300);transform-origin:0 0;">Add</div>
<div class="t" style="left:87.65px;top:294.46px;font-size:10.8px;line-height:10.8px;color:#1e1e1e;font-weight:normal;transform:scaleX(0.9300);transform-origin:0 0;">100</div>
<div class="t" style="left:131.00px;top:294.46px;font-size:10.8px;line-height:10.8px;color:#1e1e1e;font-weight:normal;transform:scaleX(0.9300);transform-origin:0 0;">(317) 274-6396</div>
<div class="t" style="left:249.75px;top:294.46px;font-size:10.8px;line-height:10.8px;color:#1e1e1e;font-weight:normal;transform:scaleX(0.9300);transform-origin:0 0;">SWT IUPUI-HOST</div>
<div class="t" style="left:379.80px;top:294.46px;font-size:10.8px;line-height:10.8px;color:#1e1e1e;font-weight:normal;transform:scaleX(0.9300);transform-origin:0 0;">Nortel SI-100 T...</div>
<div class="t" style="left:472.30px;top:294.46px;font-size:10.8px;line-height:10.8px;color:#1e1e1e;font-weight:normal;transform:scaleX(0.9300);transform-origin:0 0;">HOS...</div>
<div class="t" style="left:520.60px;top:294.46px;font-size:10.8px;line-height:10.8px;color:#1e1e1e;font-weight:normal;transform:scaleX(0.9300);transform-origin:0 0;">PDPC</div>
<div class="t" style="left:582.60px;top:294.46px;font-size:10.8px;line-height:10.8px;color:#1e1e1e;font-weight:normal;transform:scaleX(0.9300);transform-origin:0 0;">No</div>
<div class="t" style="left:30.80px;top:316.06px;font-size:10.8px;line-height:10.8px;color:#1e1e1e;font-weight:normal;transform:scaleX(0.9300);transform-origin:0 0;">Add</div>
<div class="t" style="left:87.90px;top:316.06px;font-size:10.8px;line-height:10.8px;color:#1e1e1e;font-weight:normal;transform:scaleX(0.9300);transform-origin:0 0;">200</div>
<div class="t" style="left:131.00px;top:316.06px;font-size:10.8px;line-height:10.8px;color:#1e1e1e;font-weight:normal;transform:scaleX(0.9300);transform-origin:0 0;">(317) 274-6396</div>
<div class="t" style="left:249.40px;top:316.06px;font-size:10.8px;line-height:10.8px;color:#1e1e1e;font-weight:normal;transform:scaleX(0.9300);transform-origin:0 0;">ND : ES : ES Switch - ...</div>
<div class="t" style="left:379.80px;top:316.06px;font-size:10.8px;line-height:10.8px;color:#1e1e1e;font-weight:normal;transform:scaleX(0.9300);transform-origin:0 0;">Node</div>
<div class="t" style="left:582.60px;top:316.06px;font-size:10.8px;line-height:10.8px;color:#1e1e1e;font-weight:normal;transform:scaleX(0.9300);transform-origin:0 0;">No</div>
<div class="t" style="left:30.80px;top:337.66px;font-size:10.8px;line-height:10.8px;color:#1e1e1e;font-weight:normal;transform:scaleX(0.9300);transform-origin:0 0;">Add</div>
<div class="t" style="left:88.05px;top:337.66px;font-size:10.8px;line-height:10.8px;color:#1e1e1e;font-weight:normal;transform:scaleX(0.9300);transform-origin:0 0;">300</div>
<div class="t" style="left:131.00px;top:337.66px;font-size:10.8px;line-height:10.8px;color:#1e1e1e;font-weight:normal;transform:scaleX(0.9300);transform-origin:0 0;">(317) 274-6396</div>
<div class="t" style="left:249.30px;top:337.66px;font-size:10.8px;line-height:10.8px;color:#1e1e1e;font-weight:normal;transform:scaleX(0.9300);transform-origin:0 0;">IN102__ESM (Indianap...</div>
<div class="t" style="left:379.70px;top:337.66px;font-size:10.8px;line-height:10.8px;color:#1e1e1e;font-weight:normal;transform:scaleX(0.9300);transform-origin:0 0;">IDF</div>
<div class="t" style="left:582.60px;top:337.66px;font-size:10.8px;line-height:10.8px;color:#1e1e1e;font-weight:normal;transform:scaleX(0.9300);transform-origin:0 0;">No</div>
<div class="t" style="left:651.60px;top:337.66px;font-size:10.8px;line-height:10.8px;color:#1e1e1e;font-weight:normal;transform:scaleX(0.9300);transform-origin:0 0;">E05-01</div>
<div class="t" style="left:762.60px;top:337.66px;font-size:10.8px;line-height:10.8px;color:#1e1e1e;font-weight:normal;transform:scaleX(0.9300);transform-origin:0 0;">5</div>
<div class="t" style="left:30.80px;top:359.26px;font-size:10.8px;line-height:10.8px;color:#1e1e1e;font-weight:normal;transform:scaleX(0.9300);transform-origin:0 0;">Add</div>
<div class="t" style="left:88.20px;top:359.26px;font-size:10.8px;line-height:10.8px;color:#1e1e1e;font-weight:normal;transform:scaleX(0.9300);transform-origin:0 0;">400</div>
<div class="t" style="left:131.00px;top:359.26px;font-size:10.8px;line-height:10.8px;color:#1e1e1e;font-weight:normal;transform:scaleX(0.9300);transform-origin:0 0;">(317) 274-6396</div>
<div class="t" style="left:249.40px;top:359.26px;font-size:10.8px;line-height:10.8px;color:#1e1e1e;font-weight:normal;transform:scaleX(0.9300);transform-origin:0 0;">Eqp2650_03 (TestSite0...</div>
<div class="t" style="left:379.80px;top:359.26px;font-size:10.8px;line-height:10.8px;color:#1e1e1e;font-weight:normal;transform:scaleX(0.9300);transform-origin:0 0;">Panduit 106 M...</div>
<div class="t" style="left:582.60px;top:359.26px;font-size:10.8px;line-height:10.8px;color:#1e1e1e;font-weight:normal;transform:scaleX(0.9300);transform-origin:0 0;">No</div>
<div class="t" style="left:30.00px;top:380.86px;font-size:10.8px;line-height:10.8px;color:#1e1e1e;font-weight:normal;transform:scaleX(0.9300);transform-origin:0 0;">Remove</div>
<div class="t" style="left:87.65px;top:380.86px;font-size:10.8px;line-height:10.8px;color:#1e1e1e;font-weight:normal;transform:scaleX(0.9300);transform-origin:0 0;">100</div>
<div class="t" style="left:131.00px;top:380.86px;font-size:10.8px;line-height:10.8px;color:#1e1e1e;font-weight:normal;transform:scaleX(0.9300);transform-origin:0 0;">(317) 274-6396</div>
<div class="t" style="left:249.75px;top:380.86px;font-size:10.8px;line-height:10.8px;color:#1e1e1e;font-weight:normal;transform:scaleX(0.9300);transform-origin:0 0;">SWT IUPUI-HOST</div>
<div class="t" style="left:379.80px;top:380.86px;font-size:10.8px;line-height:10.8px;color:#1e1e1e;font-weight:normal;transform:scaleX(0.9300);transform-origin:0 0;">Nortel SI-100 T...</div>
<div class="t" style="left:472.30px;top:380.86px;font-size:10.8px;line-height:10.8px;color:#1e1e1e;font-weight:normal;transform:scaleX(0.9300);transform-origin:0 0;">HOS...</div>
<div class="t" style="left:520.60px;top:380.86px;font-size:10.8px;line-height:10.8px;color:#1e1e1e;font-weight:normal;transform:scaleX(0.9300);transform-origin:0 0;">PDPC</div>
<div class="t" style="left:582.60px;top:380.86px;font-size:10.8px;line-height:10.8px;color:#1e1e1e;font-weight:normal;transform:scaleX(0.9300);transform-origin:0 0;">No</div>
<div class="t" style="left:30.00px;top:402.46px;font-size:10.8px;line-height:10.8px;color:#1e1e1e;font-weight:normal;transform:scaleX(0.9300);transform-origin:0 0;">Remove</div>
<div class="t" style="left:87.90px;top:402.46px;font-size:10.8px;line-height:10.8px;color:#1e1e1e;font-weight:normal;transform:scaleX(0.9300);transform-origin:0 0;">200</div>
<div class="t" style="left:131.00px;top:402.46px;font-size:10.8px;line-height:10.8px;color:#1e1e1e;font-weight:normal;transform:scaleX(0.9300);transform-origin:0 0;">(317) 274-6396</div>
<div class="t" style="left:249.40px;top:402.46px;font-size:10.8px;line-height:10.8px;color:#1e1e1e;font-weight:normal;transform:scaleX(0.9300);transform-origin:0 0;">ND : ES : ES Switch - ...</div>
<div class="t" style="left:379.80px;top:402.46px;font-size:10.8px;line-height:10.8px;color:#1e1e1e;font-weight:normal;transform:scaleX(0.9300);transform-origin:0 0;">Node</div>
<div class="t" style="left:582.60px;top:402.46px;font-size:10.8px;line-height:10.8px;color:#1e1e1e;font-weight:normal;transform:scaleX(0.9300);transform-origin:0 0;">No</div>
<div class="t" style="left:30.00px;top:424.06px;font-size:10.8px;line-height:10.8px;color:#1e1e1e;font-weight:normal;transform:scaleX(0.9300);transform-origin:0 0;">Remove</div>
<div class="t" style="left:88.05px;top:424.06px;font-size:10.8px;line-height:10.8px;color:#1e1e1e;font-weight:normal;transform:scaleX(0.9300);transform-origin:0 0;">300</div>
<div class="t" style="left:131.00px;top:424.06px;font-size:10.8px;line-height:10.8px;color:#1e1e1e;font-weight:normal;transform:scaleX(0.9300);transform-origin:0 0;">(317) 274-6396</div>
<div class="t" style="left:249.30px;top:424.06px;font-size:10.8px;line-height:10.8px;color:#1e1e1e;font-weight:normal;transform:scaleX(0.9300);transform-origin:0 0;">IN102__ESM (Indianap...</div>
<div class="t" style="left:379.70px;top:424.06px;font-size:10.8px;line-height:10.8px;color:#1e1e1e;font-weight:normal;transform:scaleX(0.9300);transform-origin:0 0;">IDF</div>
<div class="t" style="left:582.60px;top:424.06px;font-size:10.8px;line-height:10.8px;color:#1e1e1e;font-weight:normal;transform:scaleX(0.9300);transform-origin:0 0;">No</div>
<div class="t" style="left:651.60px;top:424.06px;font-size:10.8px;line-height:10.8px;color:#1e1e1e;font-weight:normal;transform:scaleX(0.9300);transform-origin:0 0;">E05-01</div>
<div class="t" style="left:762.60px;top:424.06px;font-size:10.8px;line-height:10.8px;color:#1e1e1e;font-weight:normal;transform:scaleX(0.9300);transform-origin:0 0;">5</div>
<div class="t" style="left:30.00px;top:445.66px;font-size:10.8px;line-height:10.8px;color:#1e1e1e;font-weight:normal;transform:scaleX(0.9300);transform-origin:0 0;">Remove</div>
<div class="t" style="left:88.20px;top:445.66px;font-size:10.8px;line-height:10.8px;color:#1e1e1e;font-weight:normal;transform:scaleX(0.9300);transform-origin:0 0;">400</div>
<div class="t" style="left:131.00px;top:445.66px;font-size:10.8px;line-height:10.8px;color:#1e1e1e;font-weight:normal;transform:scaleX(0.9300);transform-origin:0 0;">(317) 274-6396</div>
<div class="t" style="left:249.40px;top:445.66px;font-size:10.8px;line-height:10.8px;color:#1e1e1e;font-weight:normal;transform:scaleX(0.9300);transform-origin:0 0;">Eqp2650_03 (TestSite0...</div>
<div class="t" style="left:379.80px;top:445.66px;font-size:10.8px;line-height:10.8px;color:#1e1e1e;font-weight:normal;transform:scaleX(0.9300);transform-origin:0 0;">Panduit 106 M...</div>
<div class="t" style="left:582.60px;top:445.66px;font-size:10.8px;line-height:10.8px;color:#1e1e1e;font-weight:normal;transform:scaleX(0.9300);transform-origin:0 0;">No</div>
<div class="b" style="left:26.00px;top:489.30px;width:853.00px;height:14.70px;background:#f0f0f0"></div>
<div class="b" style="left:41.00px;top:491.50px;width:465.00px;height:10.70px;background:#c1c1c1"></div>
<svg class="b" style="left:30.5px;top:493px" width="5" height="8" viewBox="0 0 5 8"><path d="M4.5 0.5V7.5L0.5 4Z" fill="#a0a0a0"/></svg>
<svg class="b" style="left:869.5px;top:493px" width="5" height="8" viewBox="0 0 5 8"><path d="M0.5 0.5V7.5L4.5 4Z" fill="#333"/></svg>
<div class="b" style="left:26.00px;top:504.00px;width:853.00px;height:26.50px;background:#ececec;border-top:1px solid #d8d8d8"></div>
<div class="b" style="left:25.00px;top:530.00px;width:855.00px;height:1.60px;background:#a8a8a8"></div>
<div class="t" style="left:64.63px;top:512.26px;font-size:10.8px;line-height:10.8px;color:#2a2a2a;font-weight:normal;transform:scaleX(0.8892);transform-origin:0 0;">Rows Per Page:</div>
<div class="b" style="left:134.00px;top:510.20px;width:37.90px;height:14.20px;background:#fff;border:1px solid #c9c9c9"></div>
<div class="t" style="left:138.19px;top:512.06px;font-size:10.8px;line-height:10.8px;color:#222;font-weight:normal;transform:scaleX(0.9500);transform-origin:0 0;">50</div>
<svg class="b" style="left:160.5px;top:514px" width="6" height="6" viewBox="0 0 6 6"><path d="M0 0.5H6L3 5.5Z" fill="#111"/></svg>
<div class="b" style="left:181.20px;top:509.00px;width:1.00px;height:16.00px;background:#d2d2d2"></div>
<div class="b" style="left:182.20px;top:509.00px;width:1.00px;height:16.00px;background:#f8f8f8"></div>
<div class="b" style="left:220.70px;top:509.00px;width:1.00px;height:16.00px;background:#d2d2d2"></div>
<div class="b" style="left:221.70px;top:509.00px;width:1.00px;height:16.00px;background:#f8f8f8"></div>
<div class="b" style="left:299.20px;top:509.00px;width:1.00px;height:16.00px;background:#d2d2d2"></div>
<div class="b" style="left:300.20px;top:509.00px;width:1.00px;height:16.00px;background:#f8f8f8"></div>
<div class="b" style="left:330.30px;top:509.00px;width:1.00px;height:16.00px;background:#d2d2d2"></div>
<div class="b" style="left:331.30px;top:509.00px;width:1.00px;height:16.00px;background:#f8f8f8"></div>
<div class="b" style="left:397.90px;top:509.00px;width:1.00px;height:16.00px;background:#d2d2d2"></div>
<div class="b" style="left:398.90px;top:509.00px;width:1.00px;height:16.00px;background:#f8f8f8"></div>
<div class="b" style="left:472.90px;top:509.00px;width:1.00px;height:16.00px;background:#d2d2d2"></div>
<div class="b" style="left:473.90px;top:509.00px;width:1.00px;height:16.00px;background:#f8f8f8"></div>
<div class="t" style="left:230.60px;top:512.16px;font-size:10.8px;line-height:10.8px;color:#2a2a2a;font-weight:normal;transform:scaleX(0.9278);transform-origin:0 0;">Page:</div>
<div class="b" style="left:257.00px;top:509.60px;width:39.00px;height:15.40px;background:#fff;border:1px solid #c9c9c9"></div>
<div class="t" style="left:257.77px;top:512.16px;font-size:10.8px;line-height:10.8px;color:#222;font-weight:normal;transform:scaleX(0.9000);transform-origin:0 0;">1</div>
<div class="t" style="left:408.62px;top:512.16px;font-size:10.8px;line-height:10.8px;color:#2a2a2a;font-weight:normal;transform:scaleX(0.9085);transform-origin:0 0;">Data Loaded</div>
<svg class="b" style="left:34px;top:507.5px" width="13" height="15" viewBox="0 0 13 15"><path d="M3 7V4.5A3.5 3.5 0 0 1 10 4.5V7" fill="none" stroke="#a8a8a8" stroke-width="1.8"/><rect x="0.8" y="6.5" width="11.4" height="8" rx="1" fill="#f0b626" stroke="#c98e10" stroke-width="0.8"/><rect x="5.6" y="8.8" width="1.8" height="3" fill="#5a3a08"/><path d="M2 9H5M8 9H11" stroke="#f8d870" stroke-width="0.8"/></svg>
<svg class="b" style="left:49px;top:508.5px" width="14" height="14" viewBox="0 0 14 14"><path d="M1.5 12.5L7.5 6.5" stroke="#3a96d8" stroke-width="3.2" stroke-linecap="round"/><path d="M9.5 1.5A3.2 3.2 0 1 0 12.5 4.5L10.8 4.8L9.2 3.2Z" fill="none" stroke="#b5b5b5" stroke-width="1.7"/></svg>
<svg class="b" style="left:197px;top:510px" width="8" height="12" viewBox="0 0 8 12"><path d="M7.5 0.5V11.5L0.5 6Z" fill="#3a78d8"/></svg>
<svg class="b" style="left:318px;top:510px" width="6" height="12" viewBox="0 0 6 12"><path d="M0.5 0.5V11.5L5.5 6Z" fill="#3a78d8"/></svg>
<svg class="b" style="left:342px;top:509px" width="17" height="14" viewBox="0 0 17 14"><path d="M2 6.5Q3 2.5 9 3V1L13 4.2L9 7.3V5.3Q5 5 3 6.8Z" fill="#5fb05a"/><path d="M15 7.5Q14 11.5 8 11V13L4 9.8L8 6.7V8.7Q12 9 14 7.2Z" fill="#5fb05a"/></svg>
<svg class="b" style="left:372.5px;top:509px" width="14" height="13" viewBox="0 0 14 13"><circle cx="5.5" cy="5.2" r="4.3" fill="#cfe2f8" stroke="#9ec0e8"/><path d="M8.7 8.4L12.5 12" stroke="#c08a48" stroke-width="2.4"/></svg>
<div class="b" style="left:0.00px;top:552.00px;width:903.00px;height:1.00px;background:#c6c6c6"></div>
<div class="b" style="left:410.00px;top:558.50px;width:121.60px;height:25.40px;border:1px solid #cdcdcd;border-radius:4px;background:linear-gradient(#f3f3f3 0%,#ebebeb 45%,#e2e2e2 55%,#e6e6e6 100%)"></div>
<div class="b" style="left:535.90px;top:558.50px;width:68.50px;height:25.40px;border:1px solid #cdcdcd;border-radius:4px;background:linear-gradient(#f3f3f3 0%,#ebebeb 45%,#e2e2e2 55%,#e6e6e6 100%)"></div>
<div class="b" style="left:608.80px;top:558.50px;width:76.40px;height:25.40px;border:1px solid #cdcdcd;border-radius:4px;background:linear-gradient(#f3f3f3 0%,#ebebeb 45%,#e2e2e2 55%,#e6e6e6 100%)"></div>
<div class="b" style="left:689.50px;top:558.50px;width:70.50px;height:25.40px;border:1px solid #cdcdcd;border-radius:4px;background:linear-gradient(#f3f3f3 0%,#ebebeb 45%,#e2e2e2 55%,#e6e6e6 100%)"></div>
<div class="b" style="left:764.70px;top:558.50px;width:127.30px;height:25.40px;border:1px solid #cdcdcd;border-radius:4px;background:linear-gradient(#f3f3f3 0%,#ebebeb 45%,#e2e2e2 55%,#e6e6e6 100%)"></div>
<div class="b" style="left:471.50px;top:559.00px;width:1.00px;height:24.50px;background:#cccccc"></div>
<div class="b" style="left:472.50px;top:559.00px;width:1.00px;height:24.50px;background:#f6f6f6"></div>
<div class="b" style="left:500.90px;top:559.00px;width:1.00px;height:24.50px;background:#cccccc"></div>
<div class="b" style="left:501.90px;top:559.00px;width:1.00px;height:24.50px;background:#f6f6f6"></div>
<div class="b" style="left:823.90px;top:559.00px;width:1.00px;height:24.50px;background:#cccccc"></div>
<div class="b" style="left:824.90px;top:559.00px;width:1.00px;height:24.50px;background:#f6f6f6"></div>
<div class="t" style="left:439.64px;top:566.89px;font-size:11px;line-height:11px;color:#4a4d52;font-weight:bold;transform:scaleX(0.9530);transform-origin:0 0;text-shadow:0 1px 0 #fff;">Save</div>
<div class="t" style="left:564.60px;top:566.89px;font-size:11px;line-height:11px;color:#4a4d52;font-weight:bold;transform:scaleX(0.9054);transform-origin:0 0;text-shadow:0 1px 0 #fff;">Copy</div>
<div class="t" style="left:637.89px;top:566.89px;font-size:11px;line-height:11px;color:#4a4d52;font-weight:bold;transform:scaleX(0.9983);transform-origin:0 0;text-shadow:0 1px 0 #fff;">Delete</div>
<div class="t" style="left:718.78px;top:566.89px;font-size:11px;line-height:11px;color:#4a4d52;font-weight:bold;transform:scaleX(0.9556);transform-origin:0 0;text-shadow:0 1px 0 #fff;">Clear</div>
<div class="t" style="left:793.11px;top:566.89px;font-size:11px;line-height:11px;color:#4a4d52;font-weight:bold;transform:scaleX(0.9697);transform-origin:0 0;text-shadow:0 1px 0 #fff;">Prev</div>
<div class="t" style="left:838.98px;top:566.89px;font-size:11px;line-height:11px;color:#4a4d52;font-weight:bold;transform:scaleX(1.0024);transform-origin:0 0;text-shadow:0 1px 0 #fff;">Next</div>
<svg class="b" style="left:417.5px;top:565px" width="15" height="15" viewBox="0 0 15 15"><rect x="0.5" y="0.5" width="14" height="14" rx="1.5" fill="#3e64a8"/><rect x="3" y="1.5" width="9" height="4" fill="#a9bde0"/><rect x="3" y="8.5" width="9" height="6" fill="#fff"/><rect x="4.5" y="9.5" width="3" height="5" fill="#3e64a8"/></svg>
<svg class="b" style="left:479.5px;top:565.5px" width="16" height="15" viewBox="0 0 16 15"><rect x="0.5" y="1.5" width="13" height="13" rx="1.5" fill="#5aaee8"/><rect x="3" y="2.5" width="8" height="3.5" fill="#b5dcf6"/><rect x="3" y="9" width="8" height="5.5" fill="#e8f4fc"/><rect x="4.3" y="10" width="2.5" height="4.5" fill="#5aaee8"/><path d="M12 0V7M8.5 3.5H15.5" stroke="#5aaee8" stroke-width="2.4"/></svg>
<svg class="b" style="left:509px;top:565.5px" width="16" height="15" viewBox="0 0 16 15"><rect x="0.5" y="1.5" width="13" height="13" rx="1.5" fill="#3e64a8"/><rect x="3" y="2.5" width="8" height="3.5" fill="#a9bde0"/><rect x="3" y="9" width="8" height="5.5" fill="#fff"/><rect x="4.3" y="10" width="2.5" height="4.5" fill="#3e64a8"/><path d="M9.5 0.5L14.5 5.5M14.5 0.5L9.5 5.5" stroke="#e03a2a" stroke-width="1.8"/></svg>
<svg class="b" style="left:543.5px;top:564.5px" width="16" height="16" viewBox="0 0 16 16"><circle cx="8" cy="8" r="7.5" fill="#2e8a2e"/><circle cx="8" cy="8" r="6.3" fill="#3aa03a"/><path d="M8 3.8V12.2M3.8 8H12.2" stroke="#fff" stroke-width="2.6"/></svg>
<svg class="b" style="left:616.5px;top:565px" width="14" height="16" viewBox="0 0 14 16"><rect x="0.5" y="2.5" width="13" height="2" fill="#e07030"/><rect x="4.5" y="0.5" width="5" height="2.5" fill="none" stroke="#e07030" stroke-width="1.2"/><path d="M1.5 5H12.5L11.5 15.5H2.5Z" fill="#e07030"/><path d="M5 7V14M7 7V14M9 7V14" stroke="#fbd6b8"/></svg>
<svg class="b" style="left:696.5px;top:564.5px" width="16" height="16" viewBox="0 0 16 16"><path d="M2 7.5Q2.5 2.5 9 3V0.8L14 4.5L9 8.2V6Q4.5 5.5 2 7.5Z" fill="#6a4aa8"/><path d="M14 8.5Q13.5 13.5 7 13V15.2L2 11.5L7 7.8V10Q11.5 10.5 14 8.5Z" fill="#9a80cc"/></svg>
<svg class="b" style="left:772px;top:565px" width="15" height="14" viewBox="0 0 15 14"><defs><linearGradient id="ga" x1="0" x2="1"><stop offset="0" stop-color="#2a7a2a"/><stop offset="1" stop-color="#5cbc54"/></linearGradient></defs><path d="M0.5 7L7 0.8V4H14.5V10H7V13.2Z" fill="url(#ga)"/></svg>
<svg class="b" style="left:869.5px;top:565px" width="15" height="14" viewBox="0 0 15 14"><defs><linearGradient id="gb" x1="1" x2="0"><stop offset="0" stop-color="#2a7a2a"/><stop offset="1" stop-color="#5cbc54"/></linearGradient></defs><path d="M14.5 7L8 0.8V4H0.5V10H8V13.2Z" fill="url(#gb)"/></svg>
<svg class="b" style="left:893px;top:576px" width="10" height="10" viewBox="0 0 10 10"><path d="M10 1.5L1.5 10M10 5L5 10M10 8.5L8.5 10" stroke="#8a8a8a" stroke-width="0.9"/></svg>
</body></html>
